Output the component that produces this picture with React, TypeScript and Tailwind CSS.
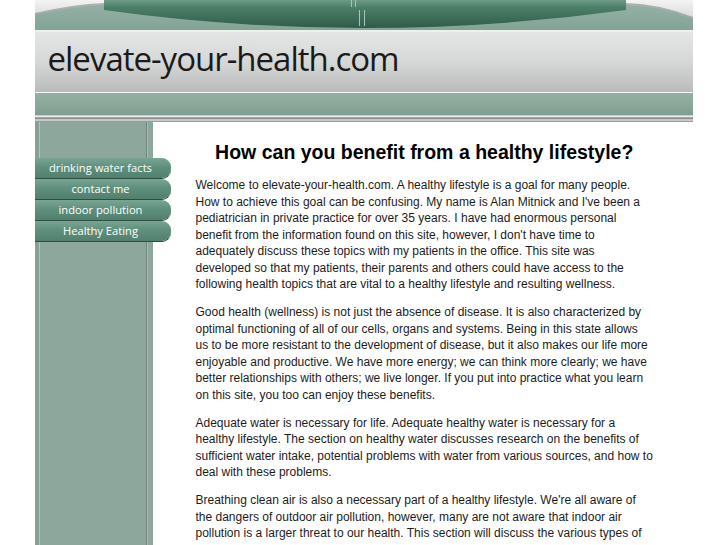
import React from "react";

const NAV = ["drinking water facts", "contact me", "indoor pollution", "Healthy Eating"];

const PARAS = [
  "Welcome to elevate-your-health.com. A healthy lifestyle is a goal for many people. How to achieve this goal can be confusing. My name is Alan Mitnick and I've been a pediatrician in private practice for over 35 years. I have had enormous personal benefit from the information found on this site, however, I don't have time to adequately discuss these topics with my patients in the office. This site was developed so that my patients, their parents and others could have access to the following health topics that are vital to a healthy lifestyle and resulting wellness.",
  "Good health (wellness) is not just the absence of disease. It is also characterized by optimal functioning of all of our cells, organs and systems. Being in this state allows us to be more resistant to the development of disease, but it also makes our life more enjoyable and productive. We have more energy; we can think more clearly; we have better relationships with others; we live longer. If you put into practice what you learn on this site, you too can enjoy these benefits.",
  "Adequate water is necessary for life. Adequate healthy water is necessary for a healthy lifestyle. The section on healthy water discusses research on the benefits of sufficient water intake, potential problems with water from various sources, and how to deal with these problems.",
  "Breathing clean air is also a necessary part of a healthy lifestyle. We're all aware of the dangers of outdoor air pollution, however, many are not aware that indoor air pollution is a larger threat to our health. This section will discuss the various types of indoor pollution, their health effects and how to reduce them.",
];

function Banner() {
  return (
    <svg width="658" height="30" viewBox="0 0 658 30" className="block">
      <defs>
        <linearGradient id="corner" x1="0" y1="0" x2="0" y2="1">
          <stop offset="0" stopColor="#f2f3f2" />
          <stop offset="1" stopColor="#c9cbca" />
        </linearGradient>
        <linearGradient id="dark" x1="0" y1="0" x2="0" y2="1">
          <stop offset="0" stopColor="#6f9c89" />
          <stop offset="0.25" stopColor="#4d8069" />
          <stop offset="1" stopColor="#2f5c4a" />
        </linearGradient>
        <linearGradient id="light" x1="0" y1="0" x2="0" y2="1">
          <stop offset="0" stopColor="#93b0a3" />
          <stop offset="1" stopColor="#83a496" />
        </linearGradient>
      </defs>
      <rect width="658" height="30" fill="url(#corner)" />
      <path d="M0,13 Q40,4 69,3 L591,3 Q625,4 658,17 L658,30 L0,30 Z" fill="#6e7572" opacity="0.5" />
      <path d="M0,15 Q40,6 69,5 L591,5 Q625,6 658,19 L658,30 L0,30 Z" fill="url(#light)" />
      <path d="M69,0 L591,0 L591,10 Q329,46 69,10 Z" fill="url(#dark)" />
      <rect x="316" y="0" width="1" height="7" fill="#a9c4b8" />
      <rect x="320" y="0" width="1" height="7" fill="#a9c4b8" />
      <rect x="324" y="10" width="1" height="16" fill="#a9c4b8" />
      <rect x="329" y="10" width="1" height="16" fill="#a9c4b8" />
    </svg>
  );
}

export default function App() {
  return (
    <div className="min-h-[545px] bg-white">
      <div className="mx-auto flex w-[658px] flex-col">
        <Banner />
        <div className="h-[2px] bg-[#eef0ef]" />
        <div className="flex h-[60px] items-center bg-[linear-gradient(180deg,#e4e6e5_0%,#d6d8d7_50%,#b8bbb9_100%)] pl-[13px]">
          <span className="pb-[6px] font-['Open_Sans',sans-serif] text-[33px] tracking-[-1px] text-[#1a1a1a]">
            elevate-your-health.com
          </span>
        </div>
        <div className="h-px bg-[#f4f5f4]" />
        <div className="h-[22px] bg-[linear-gradient(180deg,#95afa3_0%,#8aa699_60%,#7e9d90_100%)]" />
        <div className="h-px bg-[#c9cbca]" />
        <div className="h-px bg-[#eeeeee]" />
        <div className="h-px bg-[#a3a5a4]" />
        <div className="h-px bg-[#8d8f8e]" />
        <div className="h-[2px] bg-[#c6c8c7]" />
        <div className="h-px bg-[#9c9e9d]" />

        <div className="flex min-h-[430px]">
          <div className="w-[118px] shrink-0 bg-[linear-gradient(90deg,#879f94_0px,#879f94_4px,#b3c4bb_4px,#b3c4bb_5px,#8ea79c_5px,#8ea79c_111px,#6f877c_111px,#6f877c_112px,#a8bbb1_112px,#a8bbb1_113px,#8ea79c_113px,#8ea79c_118px)] pt-[36px]">
            <nav className="relative z-10 flex w-[136px] flex-col gap-px">
              {NAV.map((n) => (
                <a
                  key={n}
                  href="#"
                  className="flex h-[20px] items-center justify-center rounded-r-[9px] bg-[linear-gradient(180deg,#79a593_0%,#5f907d_45%,#527f6e_100%)] pr-[4px] font-['Open_Sans',sans-serif] text-[11.2px] leading-none text-white shadow-[0_1px_0_#2f4d41]"
                >
                  {n}
                </a>
              ))}
            </nav>
          </div>

          <main className="flex-1 pl-[43px] pr-[39.5px] pt-[18px] font-['Liberation_Sans',Arial,sans-serif] text-[#1c1c1c]">
            <h1 className="mb-[13px] text-center text-[19.5px] font-bold leading-[24px] text-black">
              How can you benefit from a healthy lifestyle?
            </h1>
            {PARAS.map((p, i) => (
              <p key={i} className="mb-[11.5px] text-[12px] leading-[16.5px]">
                {p}
              </p>
            ))}
          </main>
        </div>
      </div>
    </div>
  );
}
